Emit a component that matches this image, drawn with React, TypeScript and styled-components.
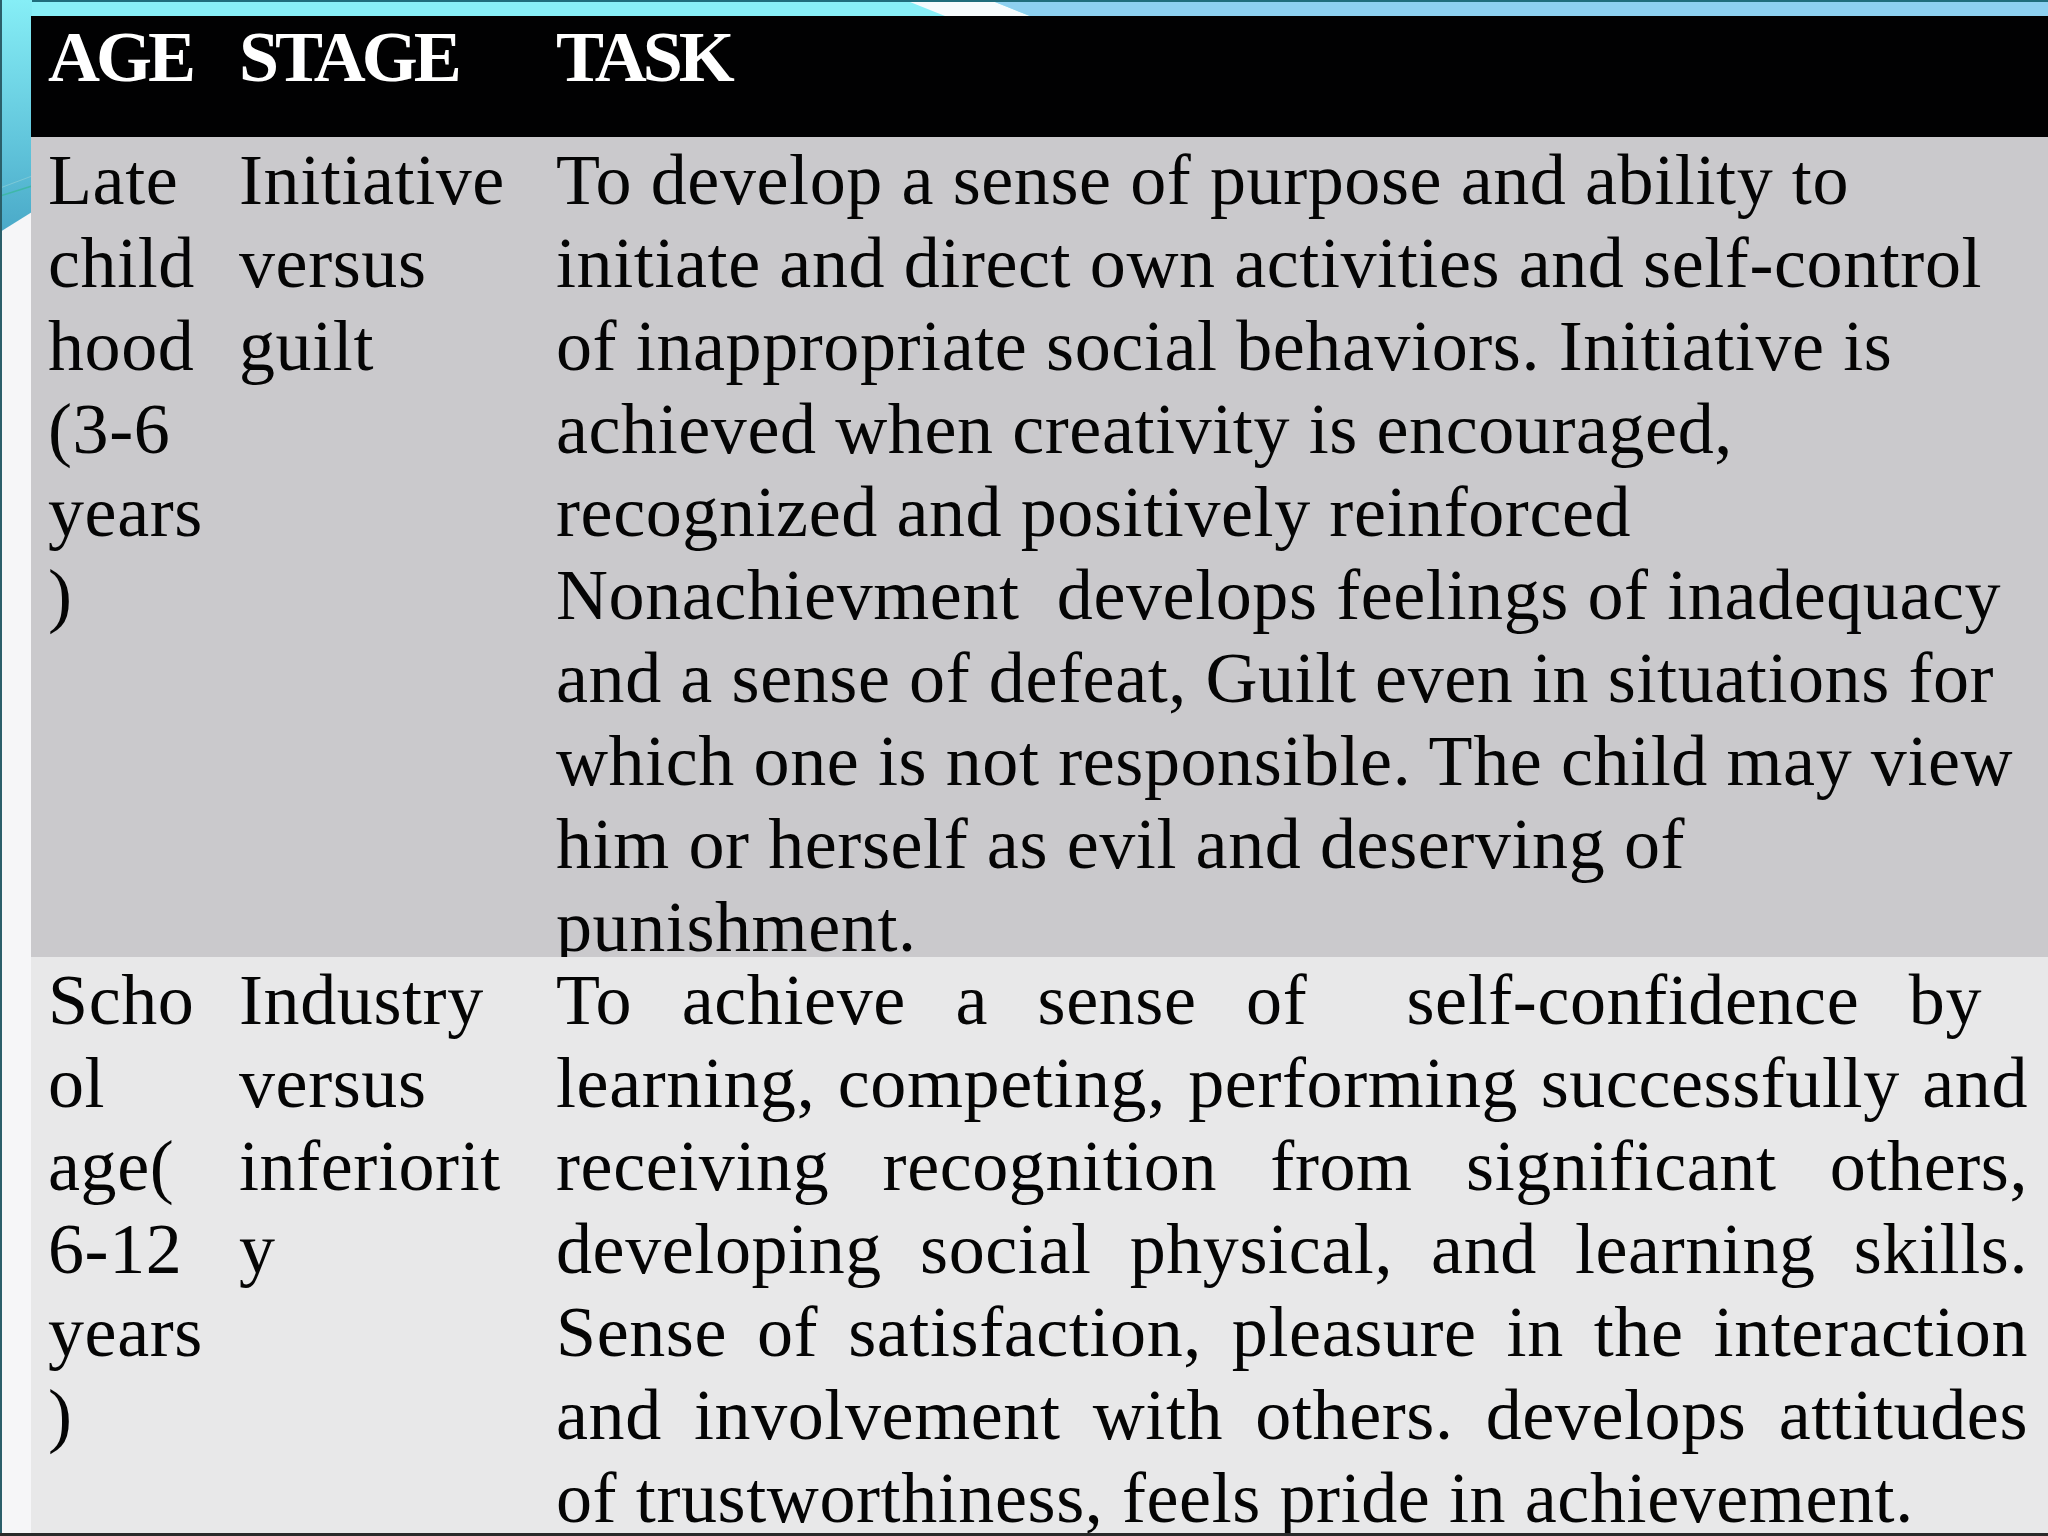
import * as React from "react";
import styled, { createGlobalStyle } from "styled-components";

// Global
const GlobalStyle = createGlobalStyle`
  html, body {
    margin: 0;
    padding: 0;
    background: #ffffff;
  }
`;

// Data
interface RowData {
  age: string[];
  stage: string[];
  task: string[];
  justify: boolean;
}

const rows: RowData[] = [
  {
    age: ["Late", "child", "hood", "(3-6", "years", ")"],
    stage: ["Initiative", "versus", "guilt"],
    task: [
      "To develop a sense of purpose and ability to",
      "initiate and direct own activities and self-control",
      "of inappropriate social behaviors. Initiative is",
      "achieved when creativity is encouraged,",
      "recognized and positively reinforced",
      "Nonachievment \u00a0develops feelings of inadequacy",
      "and a sense of defeat, Guilt even in situations for",
      "which one is not responsible. The child may view",
      "him or herself as evil and deserving of",
      "punishment.",
    ],
    justify: false,
  },
  {
    age: ["Scho", "ol", "age(", "6-12", "years", ")"],
    stage: ["Industry", "versus", "inferiorit", "y"],
    task: [
      "To achieve a sense of \u00a0self-confidence by",
      "learning, competing, performing successfully and",
      "receiving recognition from significant others,",
      "developing social physical, and learning skills.",
      "Sense of satisfaction, pleasure in the interaction",
      "and involvement with others. develops attitudes",
      "of trustworthiness, feels pride in achievement.",
    ],
    justify: true,
  },
];

const App: React.FC = () => (
  <>
    <GlobalStyle />
    <Slide>
      <Backdrop viewBox="0 0 2048 1536" width={2048} height={1536}>
        <defs>
          <linearGradient id="corner" x1="0" y1="0" x2="0" y2="1">
            <stop offset="0" stopColor="#86eef6" />
            <stop offset="0.6" stopColor="#62c6dc" />
            <stop offset="1" stopColor="#4aa9c8" />
          </linearGradient>
        </defs>
        <rect x={0} y={0} width={2048} height={16} fill="#88eff7" />
        <polygon points="905,0 990,0 1030,16 945,16" fill="#f6fbfd" />
        <polygon points="990,0 2048,0 2048,16 1030,16" fill="#8dd0f0" />
        <rect x={0} y={0} width={2048} height={2} fill="#1f6d7c" />
        <polygon points="0,0 32,0 32,212 0,232" fill="url(#corner)" />
        <polyline points="0,196 32,186" stroke="#3fb7a8" strokeWidth={1.5} fill="none" />
        <polyline points="0,188 32,176" stroke="#7dc8d6" strokeWidth={1} fill="none" />
        <rect x={0} y={0} width={2} height={1536} fill="#2b5f6a" />
        <rect x={0} y={1533} width={2048} height={3} fill="#2a2a2a" />
      </Backdrop>
      <Table>
        <HeaderRow>
          <HeadCell>AGE</HeadCell>
          <HeadCell>STAGE</HeadCell>
          <HeadCell>TASK</HeadCell>
        </HeaderRow>
        {rows.map((row, i) => (
          <BodyRow key={i} $shade={i % 2 === 0 ? "#cac9cc" : "#e8e8e9"} $height={i === 0 ? 820 : 576}>
            <Cell>
              {row.age.map((t) => (
                <Line key={t}>{t}</Line>
              ))}
            </Cell>
            <Cell>
              {row.stage.map((t) => (
                <Line key={t}>{t}</Line>
              ))}
            </Cell>
            <TaskCell>
              {row.task.map((t, j) => (
                <TaskLine
                  key={j}
                  $justify={row.justify && j < row.task.length - 1}
                  $inset={row.justify && j === 0 ? 46 : 0}
                >
                  {t}
                </TaskLine>
              ))}
            </TaskCell>
          </BodyRow>
        ))}
      </Table>
    </Slide>
  </>
);

const Slide = styled.div`
  position: relative;
  width: 2048px;
  height: 1536px;
  overflow: hidden;
  background: #f6f6f8;
`;

const Backdrop = styled.svg`
  position: absolute;
  left: 0;
  top: 0;
  display: block;
`;

const Table = styled.div`
  position: relative;
  margin: 16px 0 0 31px;
  width: 2017px;
  font-family: "Liberation Serif", "DejaVu Serif", serif;
  font-size: 72px;
  line-height: 83px;
  letter-spacing: 0.6px;
  color: #050505;
`;

const Grid = styled.div`
  display: grid;
  grid-template-columns: 191px 317px 1fr;
`;

const HeaderRow = styled(Grid)`
  height: 121px;
  background: #010102;
  color: #ffffff;
  font-weight: bold;
  letter-spacing: -4px;
`;

const HeadCell = styled.div`
  padding-left: 17px;
`;

const BodyRow = styled(Grid)<{ $shade: string; $height: number }>`
  height: ${(p) => p.$height}px;
  background: ${(p) => p.$shade};
  overflow: hidden;
  padding-top: 2px;
  box-sizing: border-box;
`;

const Cell = styled.div`
  padding-left: 17px;
`;

const Line = styled.div`
  white-space: nowrap;
`;

const TaskCell = styled.div`
  padding: 0 20px 0 17px;
`;

const TaskLine = styled.div<{ $justify: boolean; $inset: number }>`
  white-space: ${(p) => (p.$justify ? "normal" : "nowrap")};
  text-align: ${(p) => (p.$justify ? "justify" : "left")};
  text-align-last: ${(p) => (p.$justify ? "justify" : "auto")};
  margin-right: ${(p) => p.$inset}px;
`;

export default App;
